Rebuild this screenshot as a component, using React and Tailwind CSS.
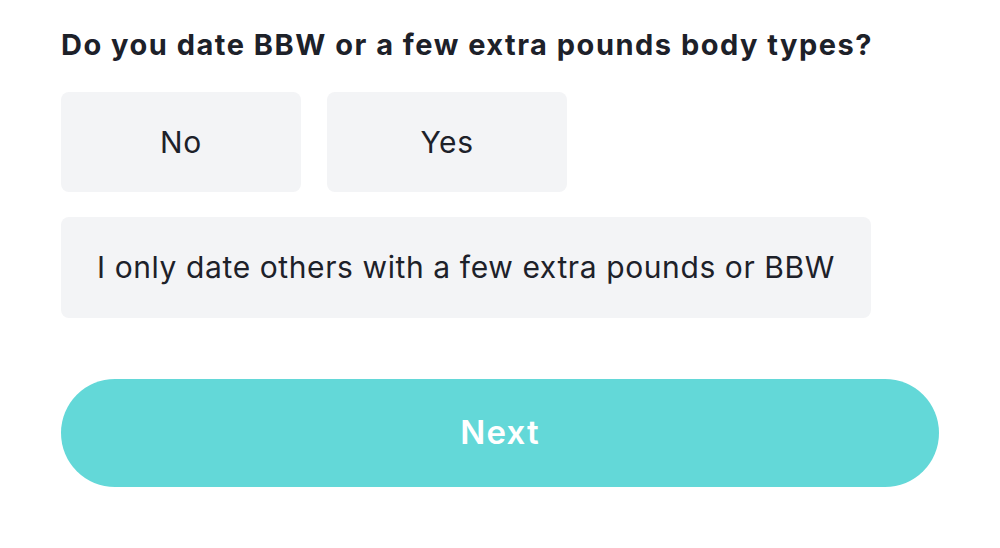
export default function App() {
  return (
    <div className="w-[1000px] h-[548px] bg-white" style={{ fontFamily: "Inter, 'Noto Sans', sans-serif" }}>
      <div className="pl-[61px] pt-[27px] flex flex-col">
        <h1 className="text-[29px] leading-[36px] font-bold text-[#1d2129] tracking-[1.5px] h-[36px] whitespace-nowrap">
          Do you date BBW or a few extra pounds body types?
        </h1>
        <div className="mt-[29px] flex gap-[26px]">
          <div className="w-[240px] h-[100px] rounded-[8px] bg-[#f3f4f6] flex items-center justify-center text-[30px] tracking-[0.6px] text-[#1d2129]">No</div>
          <div className="w-[240px] h-[100px] rounded-[8px] bg-[#f3f4f6] flex items-center justify-center text-[30px] tracking-[0.6px] text-[#1d2129]">Yes</div>
        </div>
        <div className="mt-[25px] w-[810px] h-[101px] rounded-[8px] bg-[#f3f4f6] flex items-center justify-center text-[30px] tracking-[0.6px] text-[#1d2129] whitespace-nowrap">
          I only date others with a few extra pounds or BBW
        </div>
        <div className="mt-[61px] w-[878px] h-[108px] rounded-full bg-[#63d8d8] flex items-center justify-center text-[33px] font-semibold tracking-[1.2px] text-white">
          Next
        </div>
      </div>
    </div>
  );
}
